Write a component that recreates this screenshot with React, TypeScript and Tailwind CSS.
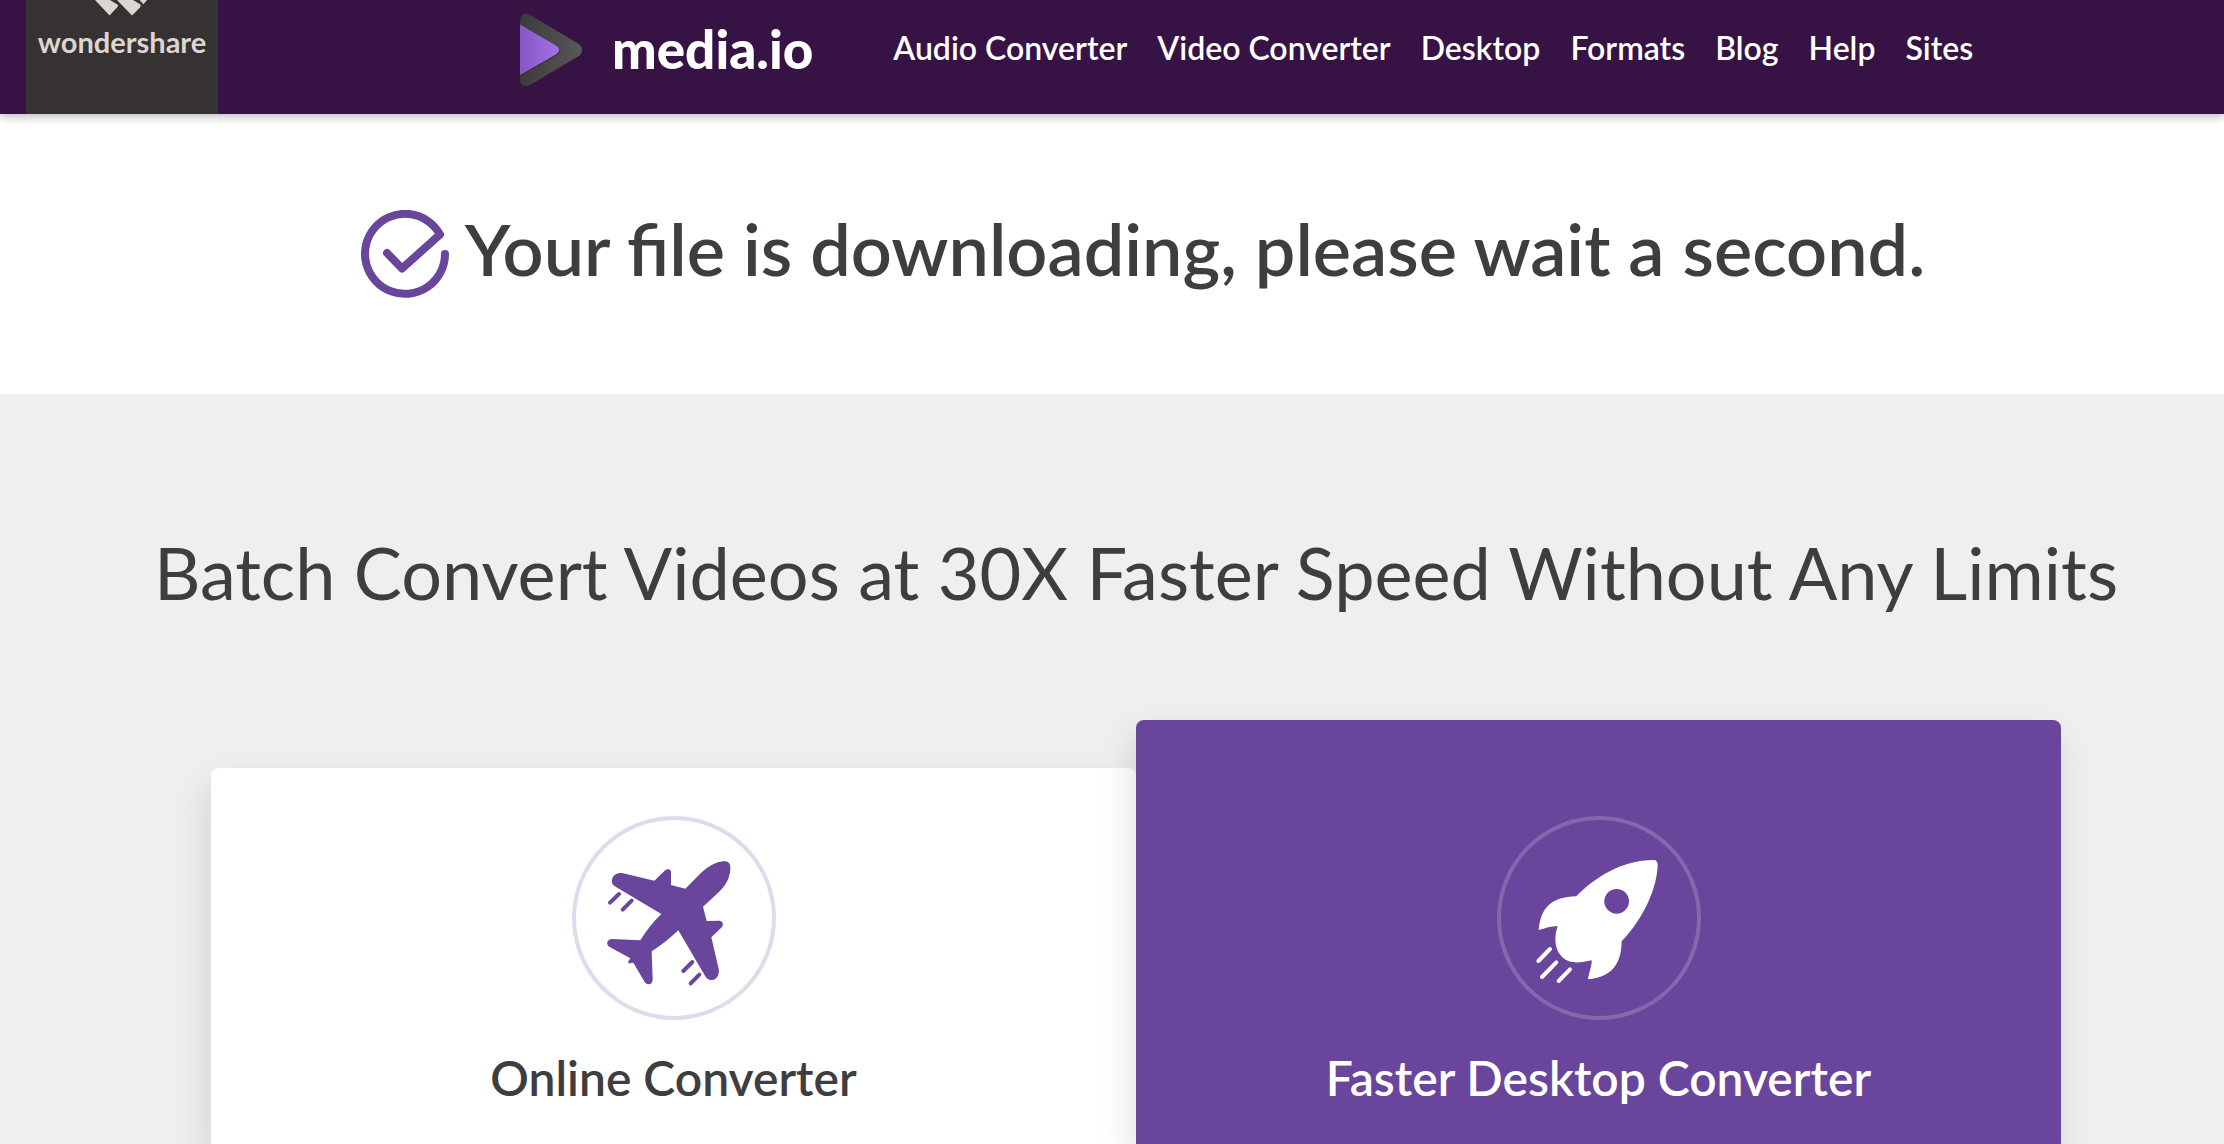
import type { ReactNode } from "react";

const LINKS = ["Audio Converter", "Video Converter", "Desktop", "Formats", "Blog", "Help", "Sites"];

function WondershareMark() {
  return (
    <svg className="h-4 w-14" viewBox="0 0 56 16" fill="#ddd6d0" aria-hidden="true">
      <path d="M1 0H16L24 5Q24.500 6 23 7.500L15.500 15.500Z" />
      <path d="M23 0H39L46.500 4.500Q47 6 46 7.500L38 15.500Z" />
      <path d="M45.500 0H53L49.500 4.200Z" />
    </svg>
  );
}

function PlayMark() {
  return (
    <svg className="h-[74px] w-[64px] shrink-0" viewBox="0 0 64 74" aria-hidden="true">
      <defs>
        <linearGradient id="shell" x1="0" x2="1">
          <stop offset="0" stopColor="#3d3a3a" />
          <stop offset="1" stopColor="#585858" />
        </linearGradient>
        <linearGradient id="core" x1="0" x2="1">
          <stop offset="0" stopColor="#8557c4" />
          <stop offset="1" stopColor="#a470ea" />
        </linearGradient>
      </defs>
      <path d="M0 8Q0 1 6 1Q8 1 10 2L58 30.500Q62 33 62 37Q62 41 58 43.500L10 72Q8 73 6 73Q0 73 0 66Z" fill="url(#shell)" />
      <path d="M0 11.500L36 32Q39.500 34.500 39.500 37Q39.500 40 36 42L0 62Z" fill="#252326" opacity="0.5" transform="translate(0 1)" />
      <path d="M0 11.500L35 32Q39 34.500 39 37Q39 39.500 35 42L0 62Z" fill="url(#core)" />
    </svg>
  );
}

function CheckMark() {
  return (
    <svg className="size-[88px] shrink-0" viewBox="0 0 88 88" fill="none" stroke="#69459b" strokeWidth="8" strokeLinecap="round" strokeLinejoin="round" aria-hidden="true">
      <path d="M84 44A40 40 0 1 1 79 24.500L41 58.500L26 43" />
    </svg>
  );
}

function Plane() {
  return (
    <svg className="size-full" viewBox="0 0 612 612" aria-hidden="true">
      <path
        fill="#69459b"
        d="M120 192C122 178 134 170 150 171L247 194L278 164C286 157 297 158 297 168V207L340 218L389 169C412 148 440 134 460 136C472 137 476 146 475 160C473 188 461 208 444 225L393 272L404 315L443 314C454 316 456 328 447 336L418 364L440 458C443 476 435 490 420 492C411 493 405 489 399 479L319 343C296 365 268 388 239 406L242 491C241 506 226 509 218 498L184 440L177 441C170 445 165 439 171 433L175 427L113 393C101 385 104 371 119 369L205 373C222 345 242 319 268 294L132 213C123 208 118 202 120 192Z"
      />
      <g stroke="#69459b" strokeWidth="12" strokeLinecap="round">
        <path d="M141 234L114 260M179 254L152 281M361 438L334 465M382 476L356 502" />
      </g>
    </svg>
  );
}

function Rocket() {
  return (
    <svg className="size-full" viewBox="0 0 612 612" aria-hidden="true">
      <path
        fill="white"
        fillRule="evenodd"
        d="M238 241C292 185 374 132 471 132C479 133 482 138 482 147C481 210 443 305 374 376C373 433 354 483 273 490C276 470 285 449 284 433C260 438 236 443 216 436C181 422 165 382 182 330C163 330 144 337 125 342C132 273 164 243 238 241ZM359 219A37 37 0 1 0 359 293A37 37 0 1 0 359 219Z"
      />
      <g stroke="white" strokeWidth="12" strokeLinecap="round">
        <path d="M159 399L124 435M178 439L135 483M219 460L185 495" />
      </g>
    </svg>
  );
}

function Card({ title, highlighted = false, children }: { title: string; highlighted?: boolean; children: ReactNode }) {
  return (
    <article
      className={
        highlighted
          ? "relative flex-1 rounded-t-lg bg-[#69459b] pt-24 text-center text-white shadow-[-4px_16px_36px_rgba(0,0,0,0.12)]"
          : "mt-12 flex-1 rounded-t-lg bg-white pt-12 text-center text-[#3f3d3e] shadow-[-4px_16px_36px_rgba(0,0,0,0.12)]"
      }
    >
      <div
        className={
          highlighted
            ? "mx-auto size-[204px] rounded-full border-4 border-[#8567ae]"
            : "mx-auto size-[204px] rounded-full border-4 border-[#e0daeb]"
        }
      >
        <div className="-m-1 size-[204px]">{children}</div>
      </div>
      <h3 className="mt-[30px] text-[48px] leading-14 font-semibold">{title}</h3>
    </article>
  );
}

export default function App() {
  return (
    <div className="flex h-screen flex-col overflow-hidden bg-[#efefef] font-['Lato',sans-serif] text-[#3f3d3e]">
      <header className="relative z-10 flex h-[114px] shrink-0 bg-[#361344] pl-[26px] text-white shadow-[0_2px_10px_rgba(0,0,0,0.3)]">
        <a href="#wondershare" className="flex w-48 flex-col items-center bg-[#363233] text-[#ddd6d0]">
          <WondershareMark />
          <span className="mt-2 text-[29px] leading-9 font-bold">wondershare</span>
        </a>
        <a href="#home" className="ml-[302px] flex h-25 items-center gap-7">
          <PlayMark />
          <span className="pb-1 text-[53px] leading-none font-black">media.io</span>
        </a>
        <nav className="ml-20 flex h-24 items-center gap-[30px] text-[32px] font-semibold whitespace-nowrap">
          {LINKS.map((link) => (
            <a key={link} href={"#" + link.toLowerCase().replace(" ", "-")}>
              {link}
            </a>
          ))}
        </nav>
      </header>

      <section className="flex h-[280px] shrink-0 items-center justify-center gap-4 bg-white pl-[62px] whitespace-nowrap">
        <CheckMark />
        <h1 className="pb-3 text-[72px] leading-20 font-semibold">Your file is downloading, please wait a second.</h1>
      </section>

      <section className="flex flex-1 flex-col pt-[138px] pl-12">
        <h2 className="text-center text-[72px] leading-20 whitespace-nowrap">
          Batch Convert Videos at 30X Faster Speed Without Any Limits
        </h2>
        <div className="mx-auto mt-27 flex w-full max-w-[1850px] flex-1">
          <Card title="Online Converter">
            <Plane />
          </Card>
          <Card title="Faster Desktop Converter" highlighted>
            <Rocket />
          </Card>
        </div>
      </section>
    </div>
  );
}
